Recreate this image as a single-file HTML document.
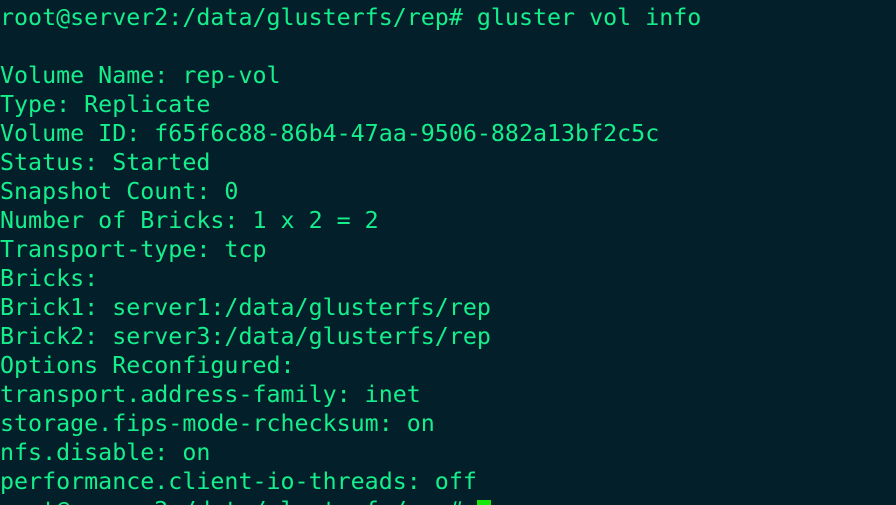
<!DOCTYPE html>
<html><head><meta charset="utf-8"><style>
html,body{margin:0;padding:0;background:#03202a;width:896px;height:505px;overflow:hidden}
pre{margin:0;padding:3px 0 0 0;font-family:"DejaVu Sans Mono","Liberation Mono",monospace;font-size:23.3px;line-height:29px;color:#16ee8c;white-space:pre}
.cur{display:inline-block;width:14px;height:24px;background:#14e80a;vertical-align:-6px}
</style></head><body><pre>root@server2:/data/glusterfs/rep# gluster vol info

Volume Name: rep-vol
Type: Replicate
Volume ID: f65f6c88-86b4-47aa-9506-882a13bf2c5c
Status: Started
Snapshot Count: 0
Number of Bricks: 1 x 2 = 2
Transport-type: tcp
Bricks:
Brick1: server1:/data/glusterfs/rep
Brick2: server3:/data/glusterfs/rep
Options Reconfigured:
transport.address-family: inet
storage.fips-mode-rchecksum: on
nfs.disable: on
performance.client-io-threads: off
root@server2:/data/glusterfs/rep# <span class="cur"></span></pre></body></html>
